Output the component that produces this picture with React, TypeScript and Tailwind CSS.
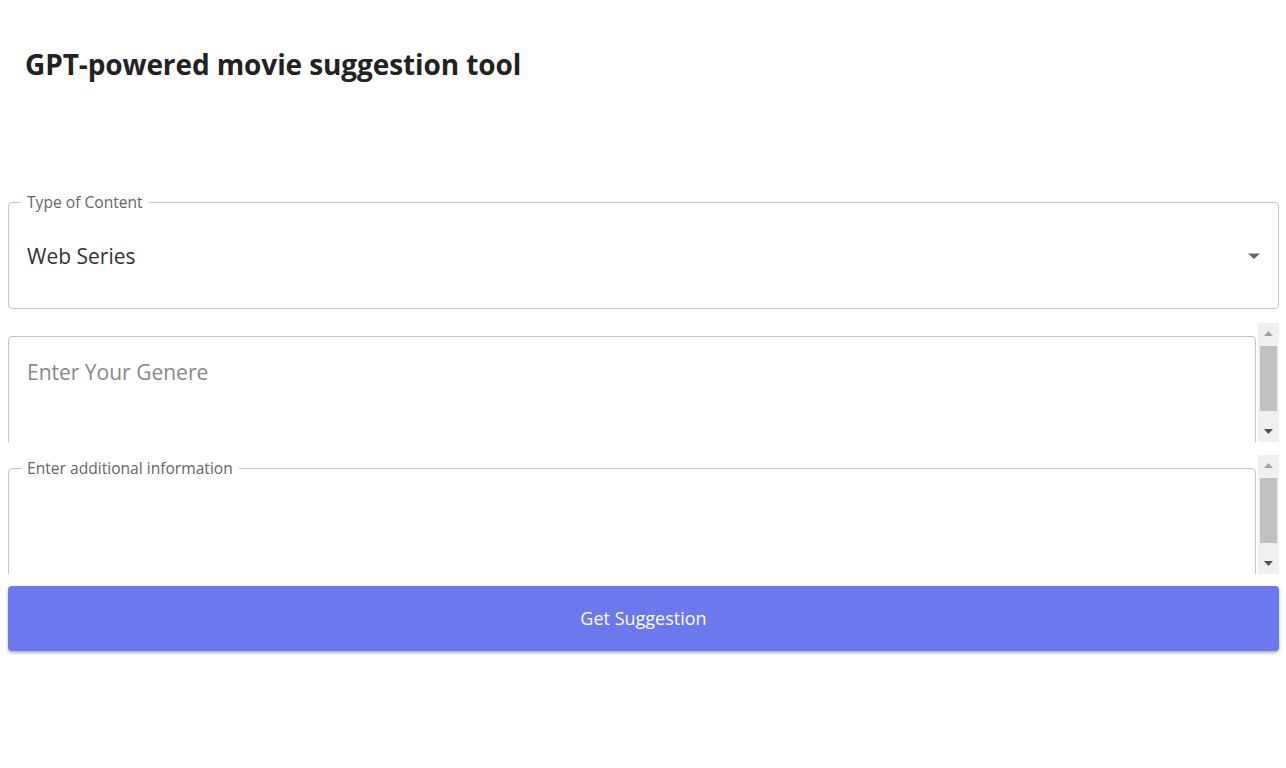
import { useState } from "react";

function Arrow({ up, color }: { up: boolean; color: string }) {
  return (
    <svg width="9" height="5" viewBox="0 0 9 5">
      <path d={up ? "M0 5L4.5 0 9 5z" : "M0 0h9L4.5 5z"} fill={color} />
    </svg>
  );
}

// windows-style scrollbar, scrolled to top
function ScrollBar() {
  return (
    <div className="flex w-[21px] shrink-0 flex-col bg-[#f0f0f0]">
      <div className="flex h-[21px] items-center justify-center">
        <Arrow up color="#a3a3a3" />
      </div>
      <div className="flex-1 px-[2px] pt-[2px]">
        <div className="h-[65px] bg-[#c1c1c1]" />
      </div>
      <div className="flex h-[21px] items-center justify-center">
        <Arrow up={false} color="#505050" />
      </div>
    </div>
  );
}

function OutlinedArea({ label, shrink }: { label: string; shrink: boolean }) {
  return (
    <div className="flex h-[119px]">
      <div className="flex-1 overflow-hidden pt-[13px] pr-[2px]">
        <div className="relative h-[143px] rounded border border-[#c4c4c4]">
          {shrink ? (
            <span className="absolute -top-[10px] left-[12px] bg-white px-[6px] text-[15.6px] leading-[18px] text-[#666]">
              {label}
            </span>
          ) : (
            <span className="absolute left-[18px] top-[21px] text-[21px] leading-[28px] text-[#888]">
              {label}
            </span>
          )}
        </div>
      </div>
      <ScrollBar />
    </div>
  );
}

export default function App() {
  const [type] = useState("Web Series");
  return (
    <div className="min-h-screen bg-white font-['Open_Sans',sans-serif] text-[#333]">
      <h1 className="px-[25px] pt-[44px] font-['Open_Sans',sans-serif] text-[28px] font-bold leading-[40px] tracking-[-0.1px] text-[#222]">
        GPT-powered movie suggestion tool
      </h1>

      <div className="flex flex-col pl-2 pr-[7px] pt-[118px]">
        <div className="relative flex h-[107px] items-center rounded border border-[#c4c4c4] pl-[18px] pr-[17px]">
          <span className="absolute -top-[10px] left-[12px] bg-white px-[6px] text-[15.6px] leading-[18px] text-[#666]">
            Type of Content
          </span>
          <span className="flex-1 text-[21px] leading-[28px] text-[#333]">{type}</span>
          <svg width="14" height="8" viewBox="0 0 14 8">
            <path d="M1 1.5h12L7 7z" fill="#666" />
          </svg>
        </div>

        <div className="mt-[14px] flex flex-col gap-[13px]">
          <OutlinedArea label="Enter Your Genere" shrink={false} />
          <OutlinedArea label="Enter additional information" shrink={true} />
        </div>

        <button className="mt-[12px] h-[65px] w-full rounded bg-[#6b78ee] text-[18px] text-white shadow-[0_2px_3px_rgba(0,0,0,0.3)]">
          Get Suggestion
        </button>
      </div>
    </div>
  );
}
